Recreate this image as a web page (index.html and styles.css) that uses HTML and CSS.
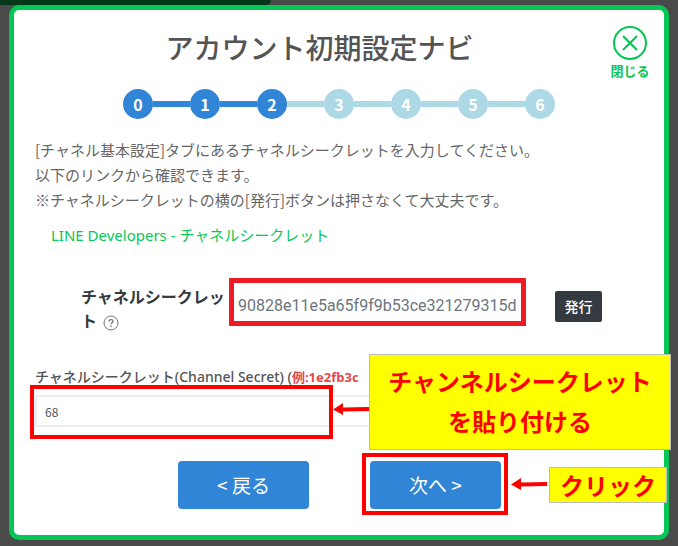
FILE: index.html
```html
<!DOCTYPE html>
<html lang="ja">

<head>
  <meta charset="UTF-8">
  <meta name="viewport" content="width=device-width, initial-scale=1.0">
  <title>アカウント初期設定ナビ</title>
  <link rel="stylesheet" href="styles.css">
</head>

<body>
  <div class="page-bar"></div>

  <main class="modal">
    <div class="modal-header">
      <h1>アカウント初期設定ナビ</h1>
      <button type="button" class="close-btn">
        <svg width="36" height="36" viewBox="0 0 36 36" fill="none" stroke="currentColor" aria-hidden="true">
          <circle cx="18" cy="18" r="16" stroke-width="2" />
          <path d="M11 11L25 25M25 11L11 25" stroke-width="2" />
        </svg>
        <span>閉じる</span>
      </button>
    </div>

    <ol class="steps">
      <li class="step done">0</li>
      <li class="step done">1</li>
      <li class="step done">2</li>
      <li class="step">3</li>
      <li class="step">4</li>
      <li class="step">5</li>
      <li class="step">6</li>
    </ol>

    <div class="modal-body">
      <p>[チャネル基本設定]タブにあるチャネルシークレットを入力してください。</p>
      <p>以下のリンクから確認できます。</p>
      <p>※チャネルシークレットの横の[発行]ボタンは押さなくて大丈夫です。</p>
      <a class="dev-link" href="#">LINE Developers - チャネルシークレット</a>

      <!-- コンソール画面の例 -->
      <div class="example">
        <label class="example-label" for="example-secret">チャネルシークレット
          <svg width="16" height="16" viewBox="0 0 16 16" fill="none" stroke="currentColor" aria-hidden="true">
            <circle cx="8" cy="8" r="7" />
            <path d="M6 6.500C6 5.200 6.900 4.600 8 4.600S10 5.300 10 6.400C10 7.700 8 7.700 8 9.300" stroke-width="1.300" />
            <path d="M8 10.500V12" stroke-width="1.400" />
          </svg>
        </label>
        <input class="example-value" id="example-secret" type="text" value="90828e11e5a65f9f9b53ce321279315d" readonly>
        <button type="button" class="issue-btn">発行</button>
      </div>

      <label class="field-label" for="channel-secret">チャネルシークレット(Channel Secret) (<span class="sample">例:1e2fb3c</span></label>
      <div class="field">
        <input class="field-input" id="channel-secret" type="text" value="68">
        <div class="mark field-mark"></div>
        <svg class="arrow field-arrow" width="36" height="12" viewBox="0 0 36 12" aria-hidden="true">
          <path d="M0 6.500L10 0V4.500L36 4V8L10 8.500V12Z" fill="#f00" />
        </svg>
        <div class="callout field-callout">チャンネルシークレット<br>を貼り付ける</div>
      </div>

      <div class="actions">
        <button type="button" class="nav-btn">&lt; 戻る</button>
        <div class="next">
          <button type="button" class="nav-btn">次へ &gt;</button>
          <div class="mark next-mark"></div>
          <svg class="arrow next-arrow" width="36" height="12" viewBox="0 0 36 12" aria-hidden="true">
            <path d="M0 6.500L10 0V4.500L36 4V8L10 8.500V12Z" fill="#f00" />
          </svg>
          <div class="callout next-callout">クリック</div>
        </div>
      </div>
    </div>
  </main>
</body>

</html>
```

FILE: styles.css
```css
:root {
  --green: #06c755;
  --blue: #3085d6;
  --light-blue: #add8e6;
  --text-color: #545454;
  --red: #ff0000;
}

* {
  box-sizing: border-box;
  margin: 0;
  padding: 0;
}

body {
  background-color: #4b4a4a;
  color: var(--text-color);
  font-family: "Noto Sans CJK JP", sans-serif;
  font-size: 15px;
}

button,
input {
  font-family: inherit;
}

.page-bar {
  width: 40%;
  height: 5px;
  background-color: #03371a;
  border-bottom-right-radius: 5px;
}

.modal {
  margin: 0 9px 6px;
  padding: 15px 0 26px;
  background-color: #fff;
  border: 5px solid var(--green);
  border-radius: 10px;
}

.modal-header {
  display: flex;
  gap: 5px;
  padding: 0 14px 0 20px;
}

.modal-header h1 {
  flex: 1;
  font-size: 28px;
  font-weight: 500;
  line-height: 44px;
  text-align: center;
}

.close-btn {
  display: flex;
  flex-direction: column;
  align-items: center;
  width: 40px;
  background: none;
  border: none;
  color: var(--green);
  font-size: 13px;
  font-weight: 700;
  line-height: 20px;
  white-space: nowrap;
  cursor: pointer;
}

.steps {
  display: flex;
  justify-content: center;
  margin-top: 8px;
  list-style: none;
}

.step {
  display: flex;
  align-items: center;
  justify-content: center;
  position: relative;
  width: 30px;
  height: 30px;
  background-color: var(--light-blue);
  border-radius: 50%;
  color: #fff;
  font-size: 16px;
  font-weight: 700;
}

.step + .step {
  margin-left: 37px;
}

/* ステップ間の線 */
.step + .step::before {
  content: "";
  position: absolute;
  right: 100%;
  width: 37px;
  height: 6px;
  background-color: var(--light-blue);
}

.step.done,
.step.done + .step.done::before {
  background-color: var(--blue);
}

.modal-body {
  padding: 18px 20px 0 21px;
}

.modal-body p {
  color: #666;
  line-height: 25px;
}

.dev-link {
  display: block;
  margin-top: 11px;
  padding-left: 16px;
  color: var(--green);
  font-family: "Noto Sans", "Noto Sans CJK JP", sans-serif;
  line-height: 25px;
  text-decoration: none;
}

.example {
  display: flex;
  align-items: flex-start;
  margin-top: 30px;
  padding-left: 46px;
}

.example-label {
  width: 148px;
  padding-top: 6px;
  color: #343a40;
  font-size: 16px;
  font-weight: 700;
  line-height: 24px;
  word-break: break-all;
}

.example-label svg {
  margin-left: 2px;
  color: #777;
  vertical-align: middle;
}

.example-value {
  width: 297px;
  height: 48px;
  padding: 6px 4px 0;
  border: 5px solid #ed1c24;
  background-color: #fff;
  color: #6c757d;
  font-family: Roboto, sans-serif;
  font-size: 16px;
}

.issue-btn {
  width: 47px;
  height: 31px;
  margin: 13px 0 0 29px;
  padding-bottom: 2px;
  background-color: #343a40;
  border: none;
  border-radius: 2px;
  color: #fff;
  font-size: 14px;
  font-weight: 500;
}

.field-label {
  display: block;
  margin-top: 33px;
  font-family: "Noto Sans", "Noto Sans CJK JP", sans-serif;
  font-size: 14px;
  font-weight: 500;
  line-height: 24px;
}

.sample {
  color: #e5484d;
  font-size: 13px;
  font-weight: 700;
}

.field {
  position: relative;
  margin-top: 6px;
}

.field-input {
  display: block;
  width: 100%;
  height: 32px;
  padding: 0 8px;
  border: 2px solid #eee;
  border-radius: 3px;
  color: var(--text-color);
  font-size: 12px;
}

.mark {
  position: absolute;
  border: 4px solid var(--red);
  pointer-events: none;
}

.arrow {
  position: absolute;
}

.callout {
  position: absolute;
  background-color: #ffff00;
  border: 1px solid #bbb;
  color: var(--red);
  font-size: 24px;
  font-weight: 700;
  text-align: center;
  white-space: nowrap;
}

.field-mark {
  top: -10px;
  left: -5px;
  width: 303px;
  height: 54px;
}

.field-arrow {
  top: 8px;
  left: 298px;
}

.field-callout {
  top: -41px;
  left: 334px;
  width: 302px;
  padding: 6px 0 8px;
  line-height: 40px;
}

.actions {
  display: flex;
  justify-content: center;
  gap: 61px;
  margin-top: 34px;
}

.nav-btn {
  display: block;
  width: 131px;
  height: 48px;
  padding-bottom: 2px;
  background-color: var(--blue);
  border: none;
  border-radius: 4px;
  color: #fff;
  font-size: 19px;
  cursor: pointer;
}

.next {
  position: relative;
}

.next-mark {
  top: -8px;
  left: -8px;
  width: 146px;
  height: 62px;
}

.next-arrow {
  top: 17px;
  left: 141px;
}

.next-callout {
  top: 6px;
  left: 179px;
  width: 118px;
  line-height: 34px;
}
```
